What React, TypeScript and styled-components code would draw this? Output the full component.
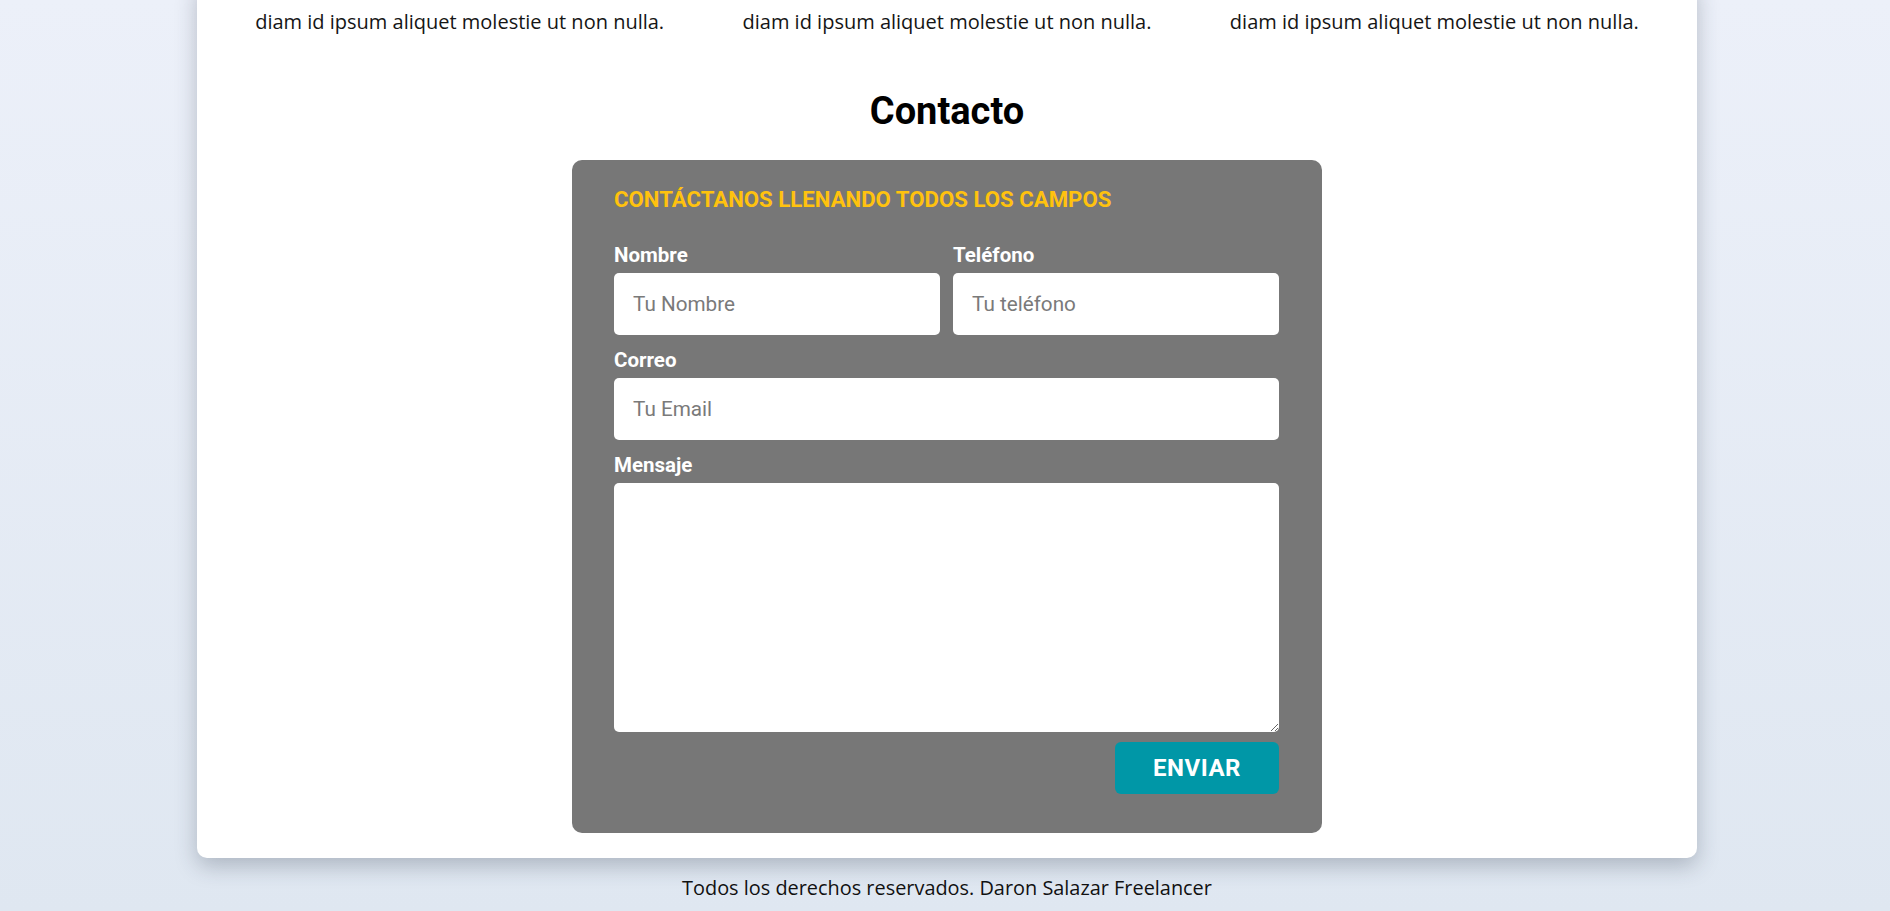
import React from "react";
import styled, { createGlobalStyle } from "styled-components";

const GlobalStyle = createGlobalStyle`
  * { box-sizing: border-box; }
  html, body { margin: 0; padding: 0; }
  body {
    font-family: Roboto, "Noto Sans", Arial, sans-serif;
    background: linear-gradient(180deg, #ecf0f9 0%, #dfe7f1 100%);
    min-height: 911px;
    overflow: hidden;
    color: #111;
  }
`;

const Page = styled.div`
  display: flex;
  flex-direction: column;
  align-items: center;
  padding-left: 4px;
  min-height: 911px;
`;

const Card = styled.main`
  width: 1500px;
  margin-top: -20px;
  background: #ffffff;
  border-radius: 10px;
  box-shadow: 0 8px 22px rgba(40, 50, 70, 0.28);
  padding: 28px 19px 25px;
  display: flex;
  flex-direction: column;
  align-items: center;
`;

const Columns = styled.div`
  width: 100%;
  display: grid;
  grid-template-columns: repeat(3, 1fr);
`;

const ColumnText = styled.p`
  margin: 0;
  text-align: center;
  font-family: "Open Sans", "Noto Sans", Arial, sans-serif;
  font-size: 20px;
  line-height: 28px;
  color: #151515;
`;

const Title = styled.h2`
  margin: 52px 0 26px;
  font-size: 38px;
  line-height: 46px;
  font-weight: 700;
  color: #000;
`;

const Form = styled.form`
  width: 750px;
  background: #777777;
  border-radius: 10px;
  padding: 26px 43px 39px 42px;
  display: flex;
  flex-direction: column;
`;

const FormHeading = styled.h3`
  margin: 0 0 31px;
  font-size: 22.2px;
  line-height: 26px;
  font-weight: 700;
  color: #ffc20e;
  text-transform: uppercase;
`;

const Row = styled.div`
  display: grid;
  grid-template-columns: 1fr 1fr;
  column-gap: 13px;
`;

const Field = styled.div`
  display: flex;
  flex-direction: column;
  margin-bottom: 13px;
`;

const Label = styled.label`
  font-size: 20.5px;
  line-height: 24px;
  font-weight: 700;
  color: #ffffff;
  margin-bottom: 6px;
`;

const Input = styled.input`
  height: 62px;
  border: none;
  border-radius: 5px;
  background: #ffffff;
  padding: 0 19px;
  font-family: Roboto, "Noto Sans", Arial, sans-serif;
  font-size: 20.7px;
  color: #333;
  outline: none;
  &::placeholder { color: #7a7a7a; }
`;

const TextArea = styled.textarea`
  height: 249px;
  border: none;
  border-radius: 5px;
  background: #ffffff;
  padding: 14px 19px;
  font-family: Roboto, "Noto Sans", Arial, sans-serif;
  font-size: 20.7px;
  outline: none;
  resize: vertical;
`;

const MessageField = styled(Field)`
  margin-bottom: 10px;
`;

const Actions = styled.div`
  display: flex;
  justify-content: flex-end;
`;

const SubmitButton = styled.button`
  width: 164px;
  height: 52px;
  border: none;
  border-radius: 6px;
  background: #0097a7;
  color: #ffffff;
  font-family: Roboto, "Noto Sans", Arial, sans-serif;
  font-size: 24px;
  font-weight: 700;
  letter-spacing: 0.5px;
  cursor: pointer;
`;

const Footer = styled.footer`
  padding-top: 18px;
  font-family: "Open Sans", "Noto Sans", Arial, sans-serif;
  font-size: 19.9px;
  line-height: 24px;
  color: #111;
  text-align: center;
`;

export default function App() {
  const line = "diam id ipsum aliquet molestie ut non nulla.";
  return (
    <>
      <GlobalStyle />
      <Page>
        <Card>
          <Columns>
            <ColumnText>{line}</ColumnText>
            <ColumnText>{line}</ColumnText>
            <ColumnText>{line}</ColumnText>
          </Columns>
          <Title>Contacto</Title>
          <Form onSubmit={(e) => e.preventDefault()}>
            <FormHeading>Contáctanos llenando todos los campos</FormHeading>
            <Row>
              <Field>
                <Label htmlFor="nombre">Nombre</Label>
                <Input id="nombre" placeholder="Tu Nombre" />
              </Field>
              <Field>
                <Label htmlFor="telefono">Teléfono</Label>
                <Input id="telefono" placeholder="Tu teléfono" />
              </Field>
            </Row>
            <Field>
              <Label htmlFor="correo">Correo</Label>
              <Input id="correo" type="email" placeholder="Tu Email" />
            </Field>
            <MessageField>
              <Label htmlFor="mensaje">Mensaje</Label>
              <TextArea id="mensaje" />
            </MessageField>
            <Actions>
              <SubmitButton type="submit">ENVIAR</SubmitButton>
            </Actions>
          </Form>
        </Card>
        <Footer>Todos los derechos reservados. Daron Salazar Freelancer</Footer>
      </Page>
    </>
  );
}
